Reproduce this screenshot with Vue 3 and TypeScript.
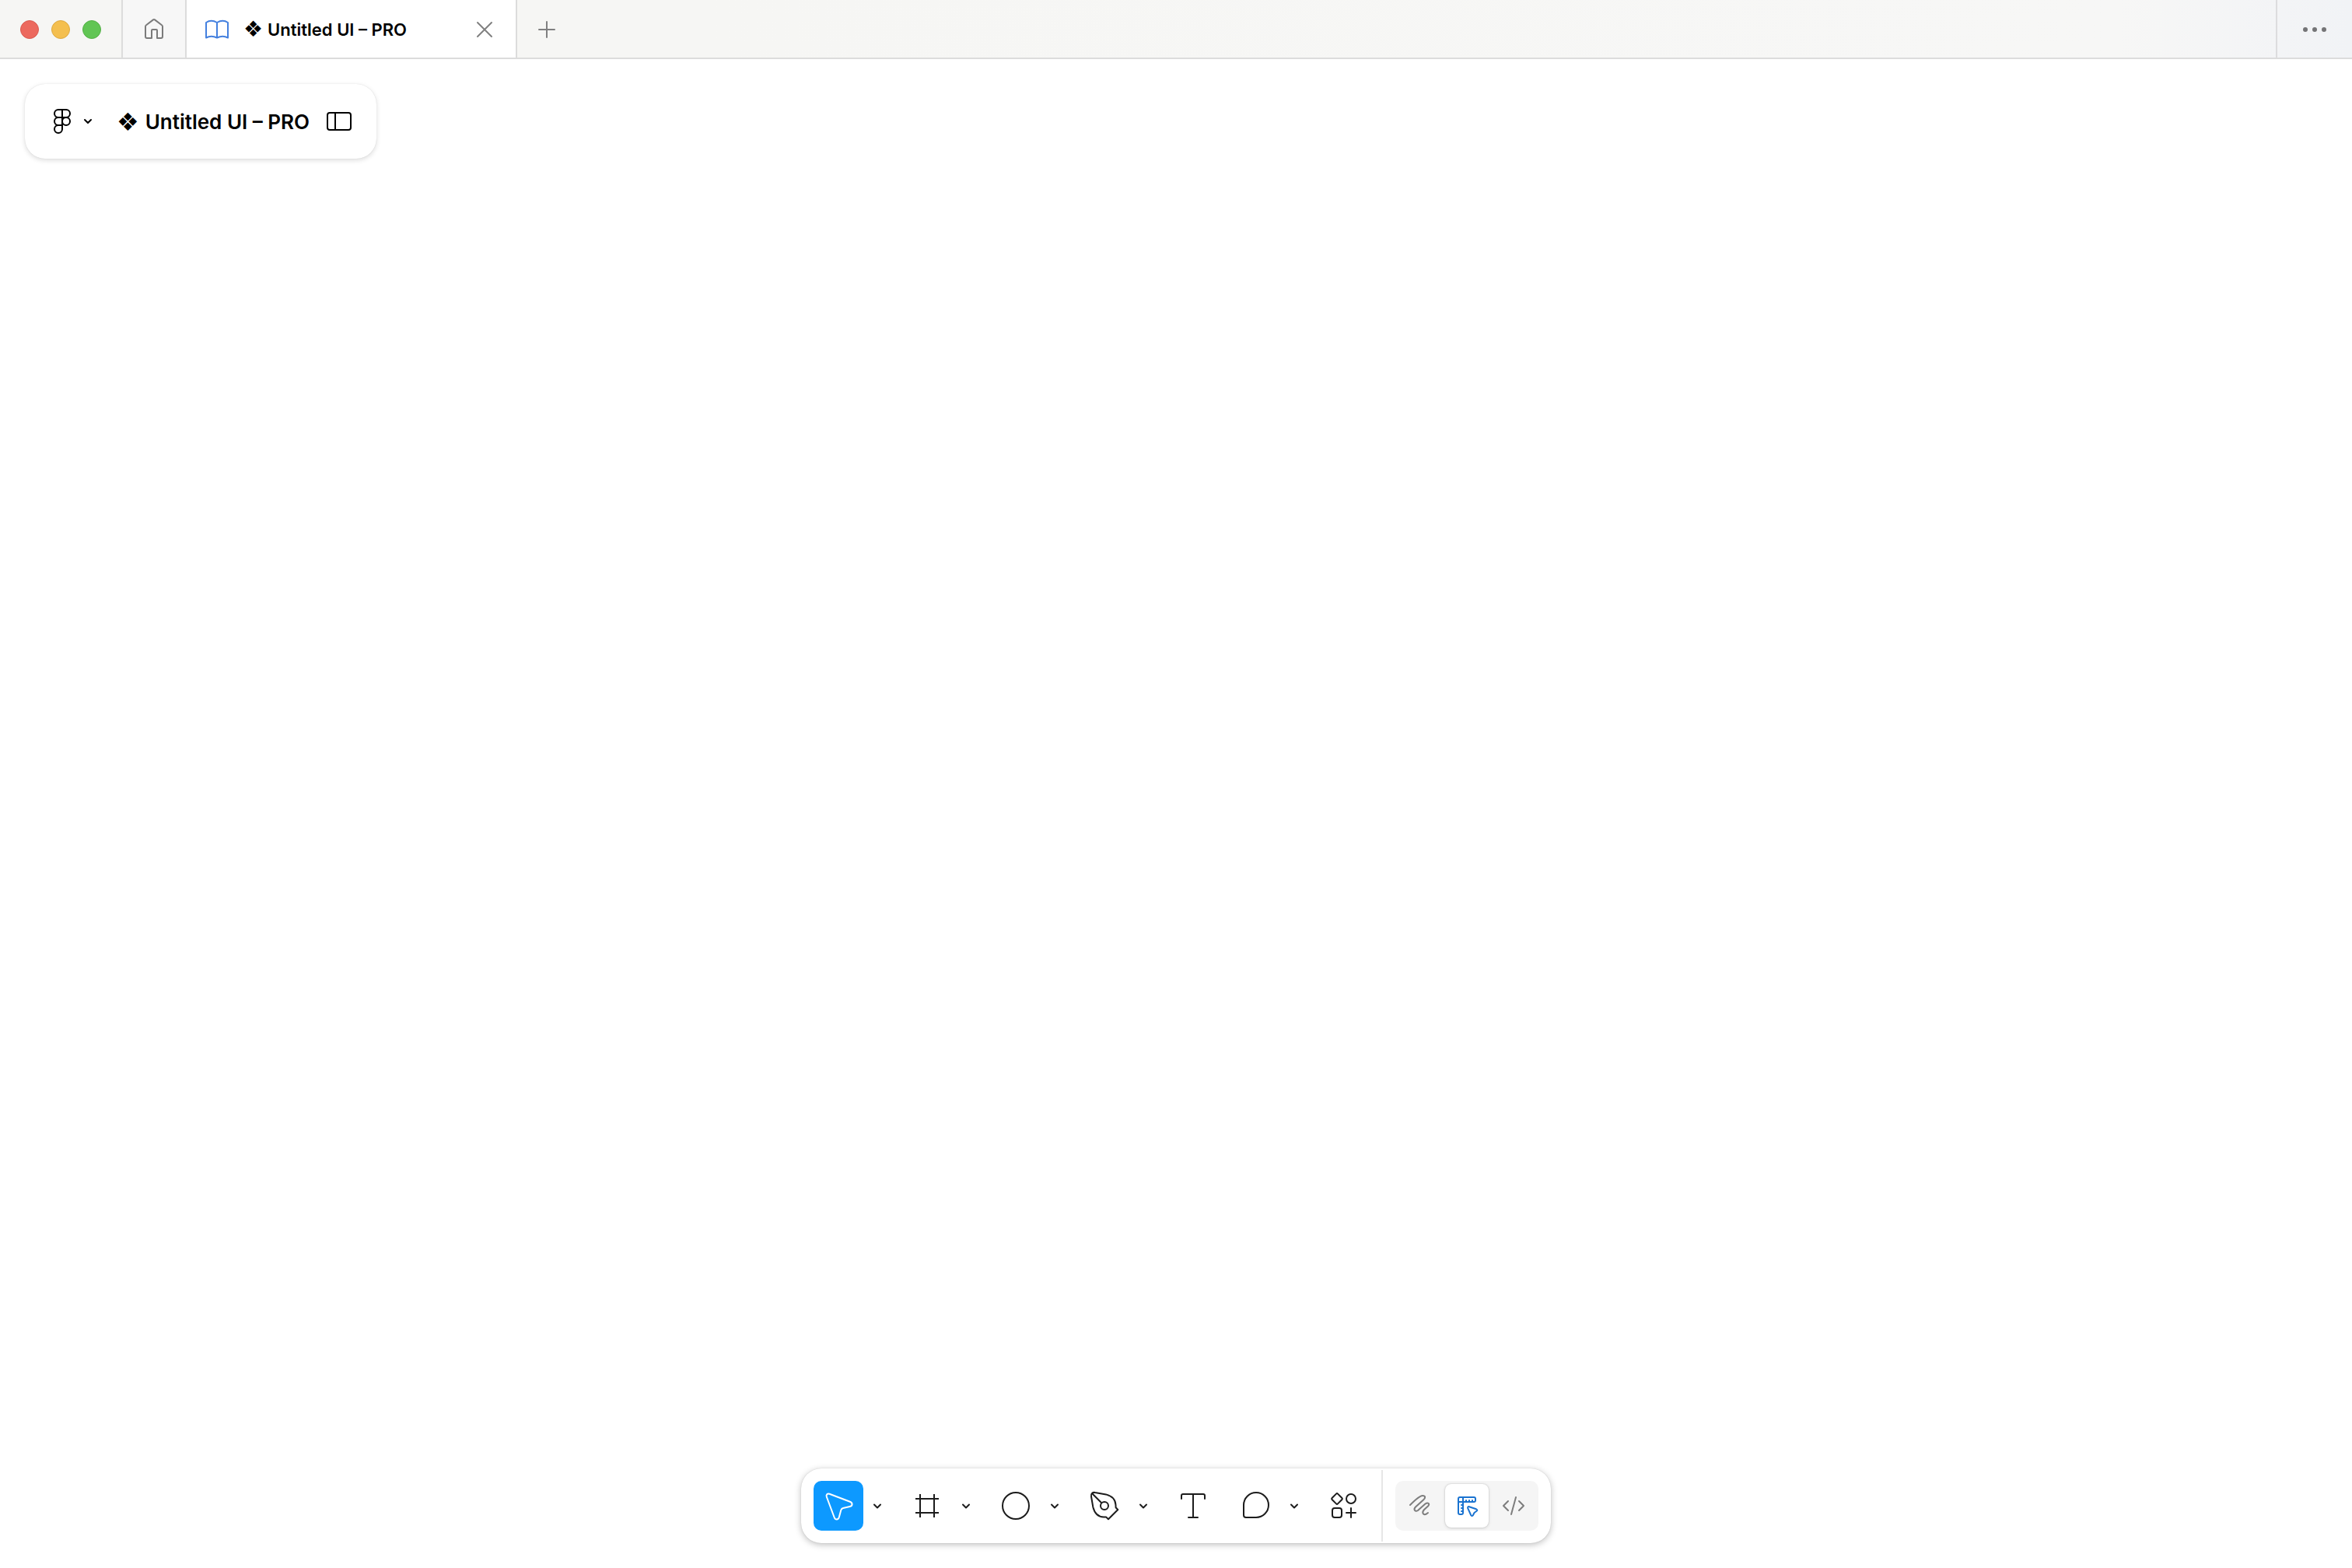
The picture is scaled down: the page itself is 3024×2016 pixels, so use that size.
<script setup lang="ts">
import { ref } from 'vue'

interface Tool {
  id: string
  label: string
  menu: boolean
}

const fileName = 'Untitled UI – PRO'

const tools: Tool[] = [
  { id: 'move', label: 'Move', menu: true },
  { id: 'frame', label: 'Frame', menu: true },
  { id: 'ellipse', label: 'Ellipse', menu: true },
  { id: 'pen', label: 'Pen', menu: true },
  { id: 'text', label: 'Text', menu: false },
  { id: 'comment', label: 'Comment', menu: true },
  { id: 'actions', label: 'Actions', menu: false },
]

const modes = [
  { id: 'draw', label: 'Draw' },
  { id: 'design', label: 'Design' },
  { id: 'dev', label: 'Dev Mode' },
]

const activeTool = ref('move')
const activeMode = ref('design')
</script>

<template>
  <div class="app">
    <header class="titlebar">
      <div class="lights">
        <button class="light red" aria-label="Close window"></button>
        <button class="light yellow" aria-label="Minimize window"></button>
        <button class="light green" aria-label="Zoom window"></button>
      </div>
      <button class="home" aria-label="Home">
        <svg width="28" height="28" viewBox="0 0 28 28" fill="none" stroke="#7b7b7b" stroke-width="2" stroke-linejoin="round">
          <path d="M3 11 Q3 10 4 9.300 L13 2.400 Q14 1.700 15 2.400 L24 9.300 Q25 10 25 11 V24 Q25 26 23 26 H18 V16 Q18 15 17 15 H12 Q11 15 11 16 V26 H5 Q3 26 3 24 Z" />
        </svg>
      </button>
      <div class="tab">
        <a class="tab-link" href="#">
          <svg width="32" height="26" viewBox="0 0 32 26" fill="none" stroke="#4480df" stroke-width="2" stroke-linejoin="round" stroke-linecap="round">
            <path d="M16 4 Q8.500 -0.500 2 4 V23.500 Q8.500 20 16 23.500 Q23.500 20 30 23.500 V4 Q23.500 -0.500 16 4 Z M16 4 V23" />
          </svg>
          <span class="name"><span class="mark">❖</span>{{ fileName }}</span>
        </a>
        <button class="close" aria-label="Close tab">
          <svg width="24" height="24" viewBox="0 0 24 24" fill="none" stroke="#808080" stroke-width="2" stroke-linecap="round">
            <path d="M3 3 L21 21 M21 3 L3 21" />
          </svg>
        </button>
      </div>
      <button class="add" aria-label="New tab">
        <svg width="24" height="24" viewBox="0 0 24 24" fill="none" stroke="#808080" stroke-width="2" stroke-linecap="round">
          <path d="M12 2 V22 M2 12 H22" />
        </svg>
      </button>
      <button class="more" aria-label="More">
        <svg width="32" height="8" viewBox="0 0 32 8" fill="#747476">
          <circle cx="4" cy="4" r="3" />
          <circle cx="16" cy="4" r="3" />
          <circle cx="28" cy="4" r="3" />
        </svg>
      </button>
    </header>

    <main class="canvas">
      <section class="file-card">
        <button class="menu" aria-label="Main menu">
          <svg width="24" height="34" viewBox="0 0 24 34" fill="none" stroke="#000" stroke-width="2">
            <path d="M12 2 H7 a5 5 0 0 0 0 10 H12 Z M12 2 H17 a5 5 0 0 1 0 10 H12 M12 12 H7 a5 5 0 0 0 0 10 H12 Z M12 22 H7 a5 5 0 1 0 5 5 Z" />
            <circle cx="17" cy="17" r="5" />
          </svg>
          <svg class="arrow" width="14" height="10" viewBox="0 0 14 10" fill="none" stroke="#000" stroke-width="2" stroke-linecap="round" stroke-linejoin="round">
            <path d="M3 3 L7 7 L11 3" />
          </svg>
        </button>
        <h1 class="name"><span class="mark">❖</span>{{ fileName }}</h1>
        <button class="panel" aria-label="Toggle panels">
          <svg width="32" height="24" viewBox="0 0 32 24" fill="none" stroke="#000" stroke-width="2">
            <rect x="1" y="1" width="30" height="22" rx="3" />
            <path d="M11 1 V23" />
          </svg>
        </button>
      </section>

      <nav class="toolbar" aria-label="Tools">
        <div v-for="tool in tools" :key="tool.id" class="tool">
          <button class="tool-button" :class="{ active: activeTool === tool.id }" :aria-label="tool.label" @click="activeTool = tool.id">
            <svg width="64" height="64" viewBox="0 0 64 64" fill="none" stroke="currentColor" stroke-width="2" stroke-linejoin="round">
              <path v-if="tool.id === 'move'" d="M20.500 16.800 L46.800 26.800 C50.600 28.300 50.400 32.200 46.600 33 L38 35 Q36 35.500 35.300 37.500 L32.800 46.800 C31.700 50.400 28 50.400 26.700 47 L16.800 20.500 C15.800 17.800 17.800 15.800 20.500 16.800 Z" />
              <path v-else-if="tool.id === 'frame'" d="M23 17 V47 M41 17 V47 M17 23 H47 M17 41 H47" />
              <circle v-else-if="tool.id === 'ellipse'" cx="32" cy="32" r="17" />
              <g v-else-if="tool.id === 'pen'">
                <path d="M20 15 L34 17.400 Q46 20.500 46.500 31 L46.600 34.300 L49.300 37 L37 49.300 L34.300 46.600 L31 46.500 Q20.500 46 17.400 34 L15 20 Q14.500 17.500 16 16 Q17.500 14.500 20 15 Z M16 16 L28.200 28.200" />
                <circle cx="32" cy="32" r="5" />
              </g>
              <path v-else-if="tool.id === 'text'" d="M17 23 V19 Q17 17 19 17 H45 Q47 17 47 19 V23 M32 17 V47 M26 47 H38" stroke-linecap="round" />
              <path v-else-if="tool.id === 'comment'" d="M17 44 V31 a16 16 0 1 1 16 16 H20 a3 3 0 0 1 -3 -3 Z" />
              <g v-else>
                <path d="M22 16.600 Q23 15.600 24 16.600 L29.400 22 Q30.400 23 29.400 24 L24 29.400 Q23 30.400 22 29.400 L16.600 24 Q15.600 23 16.600 22 Z" />
                <circle cx="41" cy="23" r="6" />
                <rect x="17" y="35" width="12" height="12" rx="3" />
                <path d="M41 35 V47 M35 41 H47" stroke-linecap="round" />
              </g>
            </svg>
          </button>
          <button v-if="tool.menu" class="tool-menu" :aria-label="tool.label + ' options'">
            <svg width="14" height="10" viewBox="0 0 14 10" fill="none" stroke="currentColor" stroke-width="2" stroke-linecap="round" stroke-linejoin="round">
              <path d="M3 3.500 L7 7.500 L11 3.500" />
            </svg>
          </button>
        </div>
        <div class="divider"></div>
        <div class="modes">
          <button v-for="mode in modes" :key="mode.id" class="mode" :class="{ active: activeMode === mode.id }" :aria-label="mode.label" @click="activeMode = mode.id">
            <svg width="56" height="56" viewBox="0 0 56 56" fill="none" stroke="currentColor" stroke-width="2" stroke-linejoin="round" stroke-linecap="round">
              <path v-if="mode.id === 'draw'" d="M15 27 C21 21 27 15 31 15 C35 15 35 18 32 20.500 L22 29.500 C19 32.500 21 36.500 25 34 L34.500 25.500 C38 23 41 25.500 38 28.500 L33 33 C29.500 37 32 40.500 36 38.500 L38 37" />
              <g v-else-if="mode.id === 'design'">
                <path d="M19 17 H37 Q39 17 39 19 V21 Q39 23 37 23 H23 V37 Q23 39 21 39 H19 Q17 39 17 37 V19 Q17 17 19 17 Z M23 17 V23 M17 23 H23 M27 22 V21 M31 22 V21 M35 22 V21 M22 27 H21 M22 31 H21 M22 35 H21" />
                <path d="M31 29.200 L40 32.300 Q42.300 33.500 40.500 34.800 L37.500 37 L35.800 40.300 Q34.300 42 33.200 40 L29.200 31.200 Q28.800 28.700 31 29.200 Z" />
              </g>
              <path v-else d="M21 22 L15 28 L21 34 M35 22 L41 28 L35 34 M31 17 L25 39" />
            </svg>
          </button>
        </div>
      </nav>
    </main>
  </div>
</template>

<style>
body {
  margin: 0;
  background: #fff;
}
</style>

<style scoped>
.app {
  display: flex;
  flex-direction: column;
  min-height: 100vh;
  font-family: Inter, "Liberation Sans", sans-serif;
  color: #000;
}

button {
  display: flex;
  align-items: center;
  justify-content: center;
  margin: 0;
  padding: 0;
  border: 0;
  background: none;
  color: inherit;
  font: inherit;
}

svg {
  display: block;
  flex: none;
}

.titlebar {
  display: flex;
  height: 74px;
  border-bottom: 2px solid #dcdcdc;
  background: linear-gradient(90deg, #f6f6f4 0, #f6f6f4 30%, #f7f7f6 90%, #f3f4f6 97%, #f1f3f6 100%);
}

.lights {
  display: flex;
  align-items: center;
  gap: 16px;
  padding: 2px 26px 0;
}

.light {
  box-sizing: border-box;
  width: 24px;
  height: 24px;
  border-radius: 50%;
}

.red {
  background: #ec695e;
  border: 1px solid #d95a50;
}

.yellow {
  background: #f4bf4f;
  border: 1px solid #dea940;
}

.green {
  background: #61c554;
  border: 1px solid #53b045;
}

.home {
  width: 84px;
  border-left: 2px solid #dcdcdc;
  border-right: 2px solid #dcdcdc;
  background: #f7f7f7;
}

.tab {
  display: flex;
  align-items: center;
  justify-content: space-between;
  box-sizing: border-box;
  width: 425px;
  padding: 2px 28px 0 23px;
  border-right: 2px solid #dcdcdc;
  background: #fff;
}

.tab-link {
  display: flex;
  align-items: center;
  gap: 18px;
  color: inherit;
  text-decoration: none;
}

.name {
  display: flex;
  align-items: center;
  margin: 0;
  font-weight: 600;
  white-space: nowrap;
}

.mark {
  font-family: "DejaVu Sans", sans-serif;
  font-weight: 400;
}

.tab .name {
  gap: 6px;
  font-size: 22px;
  line-height: 28px;
}

.tab .mark {
  font-size: 28px;
}

.add {
  width: 76px;
  padding-top: 2px;
}

.more {
  width: 98px;
  margin-left: auto;
  padding-top: 2px;
  border-left: 2px solid #dcdcde;
}

.canvas {
  display: flex;
  flex: 1;
  flex-direction: column;
  align-items: center;
  justify-content: space-between;
  padding: 32px;
}

.file-card {
  display: flex;
  align-items: center;
  align-self: flex-start;
  box-sizing: border-box;
  height: 96px;
  padding: 0 32px 0 36px;
  border-radius: 26px;
  background: #fff;
  box-shadow: 0 0 1px rgba(0, 0, 0, 0.14), 0 2px 6px rgba(0, 0, 0, 0.14);
}

.menu {
  gap: 14px;
  margin-right: 30px;
}

.file-card .name {
  gap: 8px;
  margin-right: 22px;
  padding-top: 2px;
  font-size: 26px;
  line-height: 32px;
}

.file-card .mark {
  font-size: 32px;
}

.toolbar {
  display: flex;
  align-items: center;
  gap: 16px;
  box-sizing: border-box;
  height: 96px;
  padding: 0 16px;
  border-radius: 26px;
  background: #fff;
  box-shadow: 0 0 1px rgba(0, 0, 0, 0.2), 0 2px 8px rgba(0, 0, 0, 0.26);
  color: #1c1c1c;
}

.tool {
  display: flex;
}

.tool-button {
  width: 64px;
  height: 64px;
  border-radius: 10px;
}

.tool-button.active {
  background: #0d99ff;
  color: #fff;
}

.tool-menu {
  width: 34px;
  height: 64px;
  padding-left: 2px;
}

.divider {
  width: 2px;
  height: 92px;
  background: #e6e6e6;
}

.modes {
  display: flex;
  gap: 4px;
  padding: 4px;
  border-radius: 10px;
  background: #f5f5f5;
}

.mode {
  width: 56px;
  height: 56px;
  border-radius: 8px;
  color: #7d7d7d;
}

.mode.active {
  background: #fff;
  box-shadow: 0 0 2px rgba(0, 0, 0, 0.2), 0 1px 4px rgba(0, 0, 0, 0.12);
  color: #1a73d0;
}
</style>
